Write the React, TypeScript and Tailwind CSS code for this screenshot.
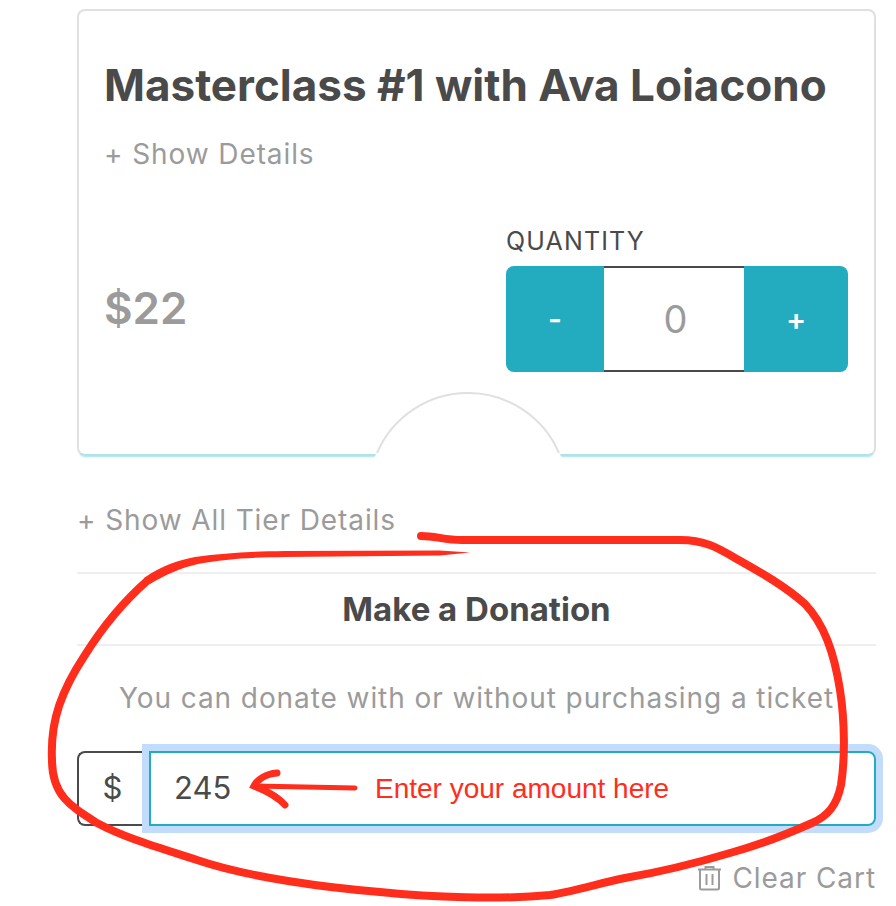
const TrashIcon = () => (
  <svg width="25" height="26" viewBox="0 0 25 26" fill="none" stroke="#9b9b9b" strokeWidth="2" className="shrink-0">
    <path d="M1 4.5h23" />
    <path d="M8.5 4V2h8v2" />
    <path d="M3 4.5V23a1.5 1.5 0 0 0 1.5 1.5h16a1.5 1.5 0 0 0 1.5-1.5V4.5" />
    <path d="M9.5 9v11M15.5 9v11" />
  </svg>
);

// hand drawn red marks that sit over the page
const Annotation = () => (
  <svg width="896" height="906" viewBox="0 0 896 906" fill="none" className="absolute inset-0 pointer-events-none">
    <path
      d="M421 536 C436 536 444 540 462 540 L680 540 C705 540 718 548 735 558 C760 572 785 586 805 604 C824 624 834 652 840 690 C845 722 845 760 841 785 C837 805 828 816 812 823 C785 835 760 845 730 853 C690 865 660 872 625 878 C600 883 575 891 550 895 C500 900 430 897 380 892 C330 888 250 878 197 860 C160 848 125 838 97 823 C70 806 52 795 52 760 C50 720 62 690 85 655 C102 628 122 603 147 581"
      stroke="#ff2d1c"
      strokeWidth="8"
      strokeLinecap="round"
    />
    <path
      d="M144 578 C162 565 180 560 195 557 C225 553 250 551.5 285 551 L440 550.5 L470 552.5 L440 555.5 L285 557 C250 557.5 225 559 198 564 C180 568 165 575 150 584 Z"
      fill="#ff2d1c"
    />
    <path d="M355 788 L254 786" stroke="#ff2d1c" strokeWidth="5" strokeLinecap="round" />
    <path
      d="M277 773 C265 774 257 780 254 786 C264 790 276 795 285 805"
      stroke="#ff2d1c"
      strokeWidth="7"
      strokeLinecap="round"
    />
  </svg>
);

const TicketCard = () => (
  <div className="relative h-[447px] rounded-lg border-2 border-[#e0e0e0] border-b-[#b0e2e9] pt-[50px] pr-[26px] pl-[25px] shadow-[0_3px_2px_-2px_#a8dfe6]">
    <h2 className="text-[44px] leading-[48px] font-bold text-[#4a4a4a] whitespace-nowrap">
      Masterclass #1 with Ava Loiacono
    </h2>
    <div className="mt-[29px] text-[28px] leading-[32px] tracking-[0.9px] text-[#9b9b9b]">+ Show Details</div>
    <div className="mt-[56px] flex items-start justify-between">
      <div className="mt-[57px] text-[44px] leading-[50px] font-semibold text-[#9b9b9b]">$22</div>
      <div className="w-[342px]">
        <div className="text-[25px] leading-[30px] tracking-[1.15px] text-[#4a4a4a]">QUANTITY</div>
        <div className="mt-[10px] flex h-[106px] text-[#9b9b9b]">
          <div className="flex w-[98px] items-center justify-center rounded-l-lg bg-[#23acbf] text-[30px] font-semibold text-white">-</div>
          <div className="flex w-[140px] items-center justify-center border-y-2 border-[#4a4a4a] pl-[3px] text-[38px]">0</div>
          <div className="flex w-[104px] items-center justify-center rounded-r-lg bg-[#23acbf] text-[30px] font-semibold text-white">+</div>
        </div>
      </div>
    </div>
    {/* ticket notch */}
    <svg width="190" height="67" viewBox="0 0 190 67" fill="none" className="absolute left-[294px] bottom-[-5px]">
      <path d="M4 61 A99 99 0 0 1 186 61 L190 67 L0 67 Z" fill="white" />
      <path d="M4 61 A99 99 0 0 1 186 61" stroke="#e0e0e0" strokeWidth="2" />
    </svg>
  </div>
);

const Donation = () => (
  <div>
    <div className="border-y-2 border-[#efefef] py-[15px] text-center text-[33px] leading-[40px] font-bold text-[#4a4a4a]">
      Make a Donation
    </div>
    <p className="mt-[35px] pl-[42px] text-[28px] leading-[34px] tracking-[0.92px] whitespace-nowrap text-[#9b9b9b]">
      You can donate with or without purchasing a ticket
    </p>
    <div className="mt-[36px] flex h-[75px]">
      <div className="flex w-[72px] items-center justify-center rounded-l-lg border-2 border-r-0 border-[#4a4a4a] pr-[3px] text-[31px] text-[#4a4a4a]">$</div>
      <input
        readOnly
        value="245"
        className="min-w-0 flex-1 rounded-r-lg border-2 border-[#23acbf] pl-[23px] text-[31px] text-[#4a4a4a] shadow-[0_0_0_7px_#c2dcfb] outline-none"
      />
    </div>
  </div>
);

export default function App() {
  return (
    <div className="relative h-[906px] w-[896px] overflow-hidden bg-white pt-[9px] pr-[20px] pl-[77px] font-['Inter',sans-serif]">
      <TicketCard />
      <div className="mt-[47px] text-[28px] leading-[34px] tracking-[0.9px] text-[#9b9b9b]">+ Show All Tier Details</div>
      <div className="mt-[35px]">
        <Donation />
      </div>
      <div className="mt-[35px] flex items-center justify-end gap-[10px] text-[28px] leading-[34px] tracking-[0.93px] text-[#9b9b9b]">
        <TrashIcon />
        <span>Clear Cart</span>
      </div>
      <Annotation />
      <span className="absolute top-[772px] left-[375px] font-['Liberation_Sans',sans-serif] text-[28px] leading-[34px] whitespace-nowrap text-[#ff2d1c]">
        Enter your amount here
      </span>
    </div>
  );
}
